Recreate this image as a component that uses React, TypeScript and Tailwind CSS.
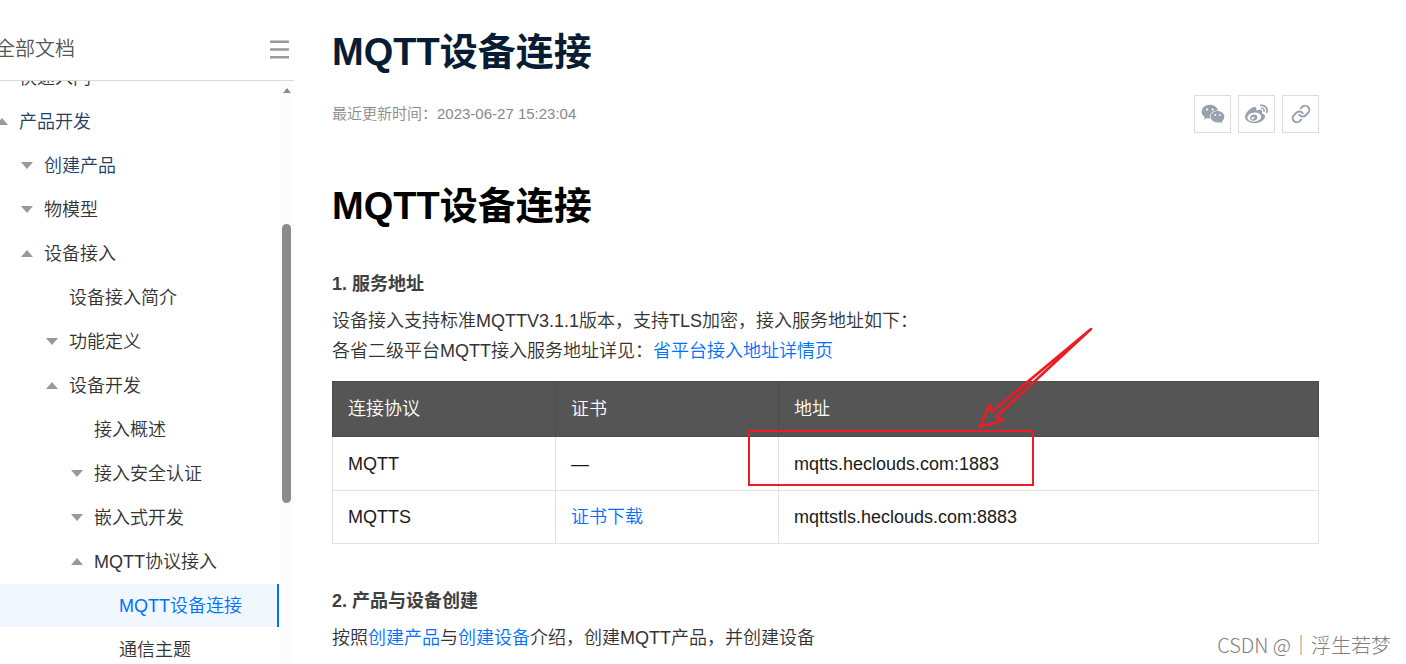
import clsx from "clsx"
import { Link } from "lucide-react"
import type { ReactNode } from "react"
import { AiFillWechat } from "react-icons/ai"
import { FaWeibo } from "react-icons/fa"

type Arrow = "up" | "down"

type NavItem = {
  label: string
  level: number
  arrow?: Arrow
  tone?: "parent" | "active"
}

const INDENTS = ["pl-0", "pl-[25px]", "pl-[50px]", "pl-[75px]", "pl-[100px]"]

const NAV_ITEMS: NavItem[] = [
  { label: "快速入门", level: 0, arrow: "down" },
  { label: "产品开发", level: 0, arrow: "up", tone: "parent" },
  { label: "创建产品", level: 1, arrow: "down", tone: "parent" },
  { label: "物模型", level: 1, arrow: "down" },
  { label: "设备接入", level: 1, arrow: "up" },
  { label: "设备接入简介", level: 2 },
  { label: "功能定义", level: 2, arrow: "down" },
  { label: "设备开发", level: 2, arrow: "up" },
  { label: "接入概述", level: 3 },
  { label: "接入安全认证", level: 3, arrow: "down" },
  { label: "嵌入式开发", level: 3, arrow: "down" },
  { label: "MQTT协议接入", level: 3, arrow: "up" },
  { label: "MQTT设备连接", level: 4, tone: "active" },
  { label: "通信主题", level: 4 },
]

const Triangle = ({ direction }: { direction: Arrow }) => (
  <svg viewBox="0 0 12 7" className="h-[7px] w-3 fill-[#999]" aria-hidden="true">
    <path d={direction === "up" ? "M0 7L6 0L12 7Z" : "M0 0L6 7L12 0Z"} />
  </svg>
)

const NavRow = ({ label, level, arrow, tone }: NavItem) => (
  <li>
    <a
      href="#"
      aria-current={tone === "active" ? "page" : undefined}
      className={clsx(
        "flex h-[43px] items-center whitespace-nowrap",
        INDENTS[level],
        !tone && "text-[#333]",
        tone === "parent" && "text-[#223d66]",
        tone === "active" && "border-r-2 border-[#0070f5] bg-[#f0f7ff] text-[#0070ff]"
      )}
    >
      <span className="mr-[11px] w-3 shrink-0">{arrow && <Triangle direction={arrow} />}</span>
      {label}
    </a>
  </li>
)

const Scrollbar = () => (
  <div className="flex w-[15px] shrink-0 flex-col items-center bg-[#fcfcfc] pt-[7px]" aria-hidden="true">
    <svg viewBox="0 0 8 5" className="h-[5px] w-2 fill-[#8b8b8b]">
      <path d="M0 5L4 0L8 5Z" />
    </svg>
    <div className="mt-[131px] h-[279px] w-[9px] rounded-full bg-[#8b8b8b]" />
  </div>
)

const Sidebar = () => (
  <aside className="flex w-[294px] shrink-0 flex-col overflow-hidden">
    <div className="flex h-[81px] shrink-0 items-center justify-between border-b border-[#d9d9d9] pt-[18px] pr-[5px]">
      <h2 className="-ml-[5px] text-xl font-[350] text-[#555]">全部文档</h2>
      <button type="button" aria-label="收起目录">
        <svg viewBox="0 0 19 19" className="size-[19px] fill-[#999]">
          <path d="M0 0.5h19v2.5H0zM0 8.3h19v2.5H0zM0 16h19v2.5H0z" />
        </svg>
      </button>
    </div>
    <div className="flex min-h-0 flex-1">
      <nav className="min-w-0 flex-1 overflow-hidden">
        <ul className="-mt-[25px] -ml-1 flex flex-col gap-px text-lg font-[350]">
          {NAV_ITEMS.map(item => <NavRow key={item.label} {...item} />)}
        </ul>
      </nav>
      <Scrollbar />
    </div>
  </aside>
)

const ShareButton = ({ label, children }: { label: string; children: ReactNode }) => (
  <button
    type="button"
    aria-label={label}
    className="flex h-[38px] w-[37px] items-center justify-center border border-[#dcdcdc] text-[#98a1ad]"
  >
    {children}
  </button>
)

const DocLink = ({ children }: { children: ReactNode }) => (
  <a href="#" className="text-[#0070ff]">{children}</a>
)

const SectionTitle = ({ children }: { children: ReactNode }) => (
  <h2 className="text-lg leading-7 font-bold text-[#404040]">{children}</h2>
)

const AddressTable = () => (
  <table className="w-full table-fixed border-collapse text-left text-lg leading-7 text-[#1a1a1a]">
    <colgroup>
      <col className="w-[223px]" />
      <col className="w-[223px]" />
      <col />
    </colgroup>
    <thead className="bg-[#555] text-white">
      <tr className="h-[55px]">
        <th className="border border-[#4c4c4c] px-[15px] font-[350]">连接协议</th>
        <th className="border border-[#4c4c4c] px-[15px] font-[350]">证书</th>
        <th className="border border-[#4c4c4c] px-[15px] font-[350]">地址</th>
      </tr>
    </thead>
    <tbody>
      <tr className="h-[54px]">
        <td className="border border-[#e2e2e2] px-[15px]">MQTT</td>
        <td className="border border-[#e2e2e2] px-[15px]">—</td>
        <td className="border border-[#e2e2e2] px-[15px]">mqtts.heclouds.com:1883</td>
      </tr>
      <tr className="h-[53px]">
        <td className="border border-[#e2e2e2] px-[15px]">MQTTS</td>
        <td className="border border-[#e2e2e2] px-[15px] font-[350]"><DocLink>证书下载</DocLink></td>
        <td className="border border-[#e2e2e2] px-[15px]">mqttstls.heclouds.com:8883</td>
      </tr>
    </tbody>
  </table>
)

// Red box and arrow drawn over the table
const Annotation = () => (
  <>
    <div className="pointer-events-none absolute top-[49px] left-[416px] h-14 w-[286px] border-2 border-[#ed1c24]" />
    <svg
      viewBox="0 0 120 106"
      className="pointer-events-none absolute -top-[56px] left-[643px] h-[106px] w-[120px] fill-none stroke-[#ed1c24]"
      strokeWidth="2.6"
      strokeLinejoin="round"
      aria-hidden="true"
    >
      <path d="M116 4L17 86.5L14.5 80L5 102L28 95.5L21 92Z" />
    </svg>
  </>
)

const Article = () => (
  <main className="min-w-0 flex-1 overflow-hidden pt-[26px] pr-[87px] pl-[38px]">
    <h1 className="text-[38px] leading-[52px] font-bold text-[#081c33]">MQTT设备连接</h1>
    <div className="mt-[17px] flex items-center justify-between">
      <p className="text-[15px] font-[350] text-[#888]">最近更新时间：2023-06-27 15:23:04</p>
      <div className="flex gap-[7px]">
        <ShareButton label="分享到微信"><AiFillWechat size={26} /></ShareButton>
        <ShareButton label="分享到微博"><FaWeibo size={23} /></ShareButton>
        <ShareButton label="复制链接"><Link size={20} strokeWidth={2.4} /></ShareButton>
      </div>
    </div>

    <h1 className="mt-[47px] mb-[38px] text-[38px] leading-[52px] font-bold text-black">MQTT设备连接</h1>

    <SectionTitle>1. 服务地址</SectionTitle>
    <p className="mt-2 text-lg leading-[30px] font-[350] text-[#333]">
      设备接入支持标准MQTTV3.1.1版本，支持TLS加密，接入服务地址如下：<br />
      各省二级平台MQTT接入服务地址详见：<DocLink>省平台接入地址详情页</DocLink>
    </p>
    <div className="relative mt-[15px] mb-[43px]">
      <AddressTable />
      <Annotation />
    </div>

    <SectionTitle>2. 产品与设备创建</SectionTitle>
    <p className="mt-2 text-lg leading-[30px] font-[350] text-[#333]">
      按照<DocLink>创建产品</DocLink>与<DocLink>创建设备</DocLink>介绍，创建MQTT产品，并创建设备
    </p>
  </main>
)

const App = () => (
  <div className="relative flex h-screen overflow-hidden bg-white font-['Liberation_Sans','Noto_Sans_CJK_SC',sans-serif]" lang="zh-CN">
    <Sidebar />
    <Article />
    <p className="absolute right-[15px] bottom-[5px] font-['Noto_Sans_CJK_SC',sans-serif] text-xl font-light text-[#808080]">
      CSDN @｜浮生若梦
    </p>
  </div>
)

export default App
